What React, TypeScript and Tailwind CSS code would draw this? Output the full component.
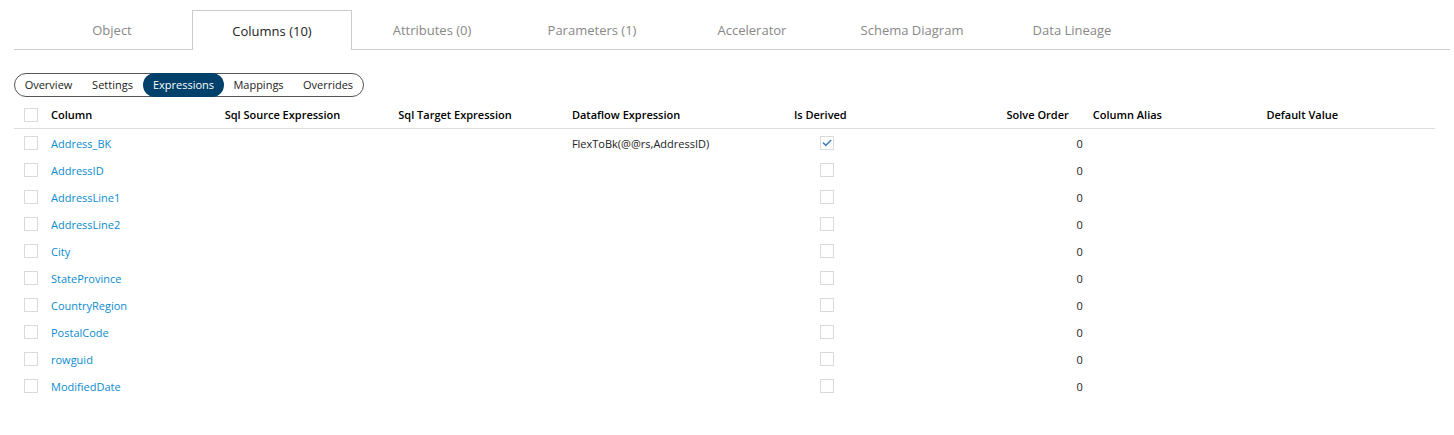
import { useState } from "react";

const tabs = [
  "Object",
  "Columns (10)",
  "Attributes (0)",
  "Parameters (1)",
  "Accelerator",
  "Schema Diagram",
  "Data Lineage",
];

const views = [
  { name: "Overview", width: "w-[67px]" },
  { name: "Settings", width: "w-[61px]" },
  { name: "Expressions", width: "w-[81px]" },
  { name: "Mappings", width: "w-[69px]" },
  { name: "Overrides", width: "w-[70px]" },
];

const rows = [
  { name: "Address_BK", dataflow: "FlexToBk(@@rs,AddressID)", derived: true },
  { name: "AddressID" },
  { name: "AddressLine1" },
  { name: "AddressLine2" },
  { name: "City" },
  { name: "StateProvince" },
  { name: "CountryRegion" },
  { name: "PostalCode" },
  { name: "rowguid" },
  { name: "ModifiedDate" },
];

function Check({ label, checked = false }: { label: string; checked?: boolean }) {
  const [on, setOn] = useState(checked);
  return (
    <label className="relative mx-auto block size-3.5">
      <input
        type="checkbox"
        aria-label={label}
        checked={on}
        onChange={() => setOn(!on)}
        className="block size-3.5 appearance-none border border-[#dadada] bg-white"
      />
      {on && (
        <svg viewBox="0 0 14 14" className="pointer-events-none absolute inset-0 size-3.5">
          <path d="M3 6.5 L5.8 9.3 L11.2 4" fill="none" stroke="#4a7ebb" strokeWidth="1.6" />
        </svg>
      )}
    </label>
  );
}

export default function App() {
  const [tab, setTab] = useState("Columns (10)");
  const [view, setView] = useState("Expressions");

  return (
    <main className="bg-white pt-2.5 pl-3.5 pr-1 font-['Open_Sans','Noto_Sans',sans-serif] text-[11px] leading-4 text-[#222]">
      <nav className="flex h-10 border-b border-[#ccc] pl-[18px] text-[13px]">
        {tabs.map((t) => (
          <button
            key={t}
            onClick={() => setTab(t)}
            className={
              t === tab
                ? "h-10 w-40 border border-b-0 border-[#ccc] bg-white font-medium text-[#222]"
                : "h-10 w-40 font-medium text-[#888]"
            }
          >
            {t}
          </button>
        ))}
      </nav>

      <div className="mt-[23px] flex h-6 w-fit rounded-full border border-[#555]">
        {views.map((v) => (
          <button
            key={v.name}
            onClick={() => setView(v.name)}
            className={`${v.width} -my-px h-6 rounded-full ${v.name === view ? "bg-[#00416b] font-medium text-white" : ""}`}
          >
            {v.name}
          </button>
        ))}
      </div>

      <div className="mt-1 pr-[15px]">
        <table className="w-full table-fixed border-collapse text-left">
          <thead>
            <tr className="h-[27px] border-b border-[#ddd] text-black *:pt-0.5 *:font-semibold">
              <th className="w-8 pl-0.5"><Check label="Select all" /></th>
              <th className="px-[5px]">Column</th>
              <th className="px-[5px]">Sql Source Expression</th>
              <th className="px-[5px]">Sql Target Expression</th>
              <th className="px-[5px]">Dataflow Expression</th>
              <th className="pl-[5px] pr-[19px] text-center">Is Derived</th>
              <th className="pl-[5px] pr-[19px] text-right">Solve Order</th>
              <th className="px-[5px]">Column Alias</th>
              <th className="px-[5px]">Default Value</th>
            </tr>
          </thead>
          <tbody>
            {rows.map((r) => (
              <tr key={r.name} className="h-[27px]">
                <td className="pt-0.5 pl-0.5"><Check label={`Select ${r.name}`} /></td>
                <td className="px-[5px] pt-1"><a href="#" className="text-[#0a8bd0]">{r.name}</a></td>
                <td></td>
                <td></td>
                <td className="px-[5px] pt-1">{r.dataflow}</td>
                <td className="px-[5px] pt-0.5"><Check label={`${r.name} is derived`} checked={r.derived} /></td>
                <td className="px-[5px] pt-1 text-right">0</td>
                <td></td>
                <td></td>
              </tr>
            ))}
          </tbody>
        </table>
      </div>
    </main>
  );
}
